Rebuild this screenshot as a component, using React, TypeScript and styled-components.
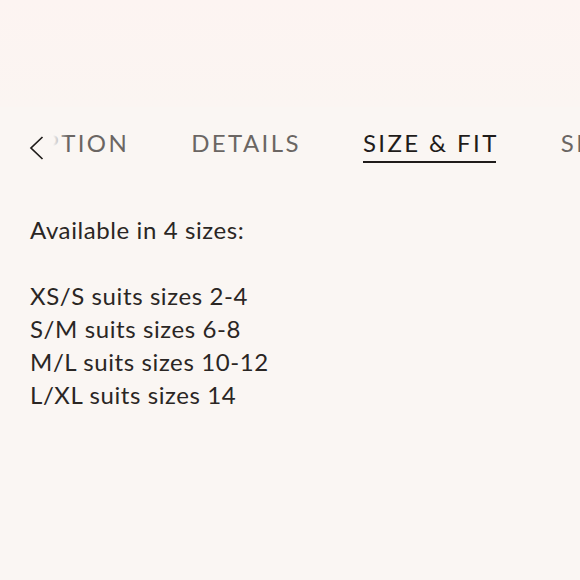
import React from 'react'
import styled, { createGlobalStyle } from 'styled-components'

const Global = createGlobalStyle`
  html, body {
    margin: 0;
    padding: 0;
    background: #faf6f3;
  }
  body {
    font-family: Lato, "Noto Sans", sans-serif;
  }
`

const Page = styled.div`
  width: 580px;
  height: 580px;
  overflow: hidden;
  background: #faf6f3;
  display: flex;
  flex-direction: column;
`

const TopBand = styled.div`
  height: 107px;
  background: linear-gradient(180deg, #fdf4f2 0%, #fbf5f2 100%);
`

const TabBar = styled.nav`
  position: relative;
  height: 60px;
  overflow: hidden;
`

const TabStrip = styled.div`
  display: flex;
  gap: 62px;
  margin-left: -53px;
  padding-top: 22px;
  white-space: nowrap;
`

const Tab = styled.div<{ $active?: boolean }>`
  position: relative;
  font-size: 24px;
  letter-spacing: 2.4px;
  line-height: 28px;
  padding-bottom: 6px;
  color: ${p => (p.$active ? '#1f1c1a' : '#6b6663')};

  &::after {
    content: '';
    position: absolute;
    left: 0;
    right: 2.4px;
    bottom: 0;
    height: 2px;
    background: ${p => (p.$active ? '#1f1c1a' : 'transparent')};
  }
`

const Back = styled.button`
  position: absolute;
  left: 0;
  top: 0;
  height: 100%;
  width: 68px;
  border: none;
  padding: 29px 0 0 29px;
  display: flex;
  align-items: flex-start;
  background: linear-gradient(90deg, #faf6f3 0%, #faf6f3 78%, rgba(250, 246, 243, 0) 100%);
  cursor: pointer;
`

const Body = styled.div`
  padding: 46px 30px 0;
  font-size: 24px;
  letter-spacing: 0.6px;
  line-height: 33px;
  color: #2a2624;
`

const Line = styled.div`
  min-height: 33px;
`

const tabs = ['DESCRIPTION', 'DETAILS', 'SIZE & FIT', 'SHIPPING']
const lines = [
  'Available in 4 sizes:',
  '',
  'XS/S suits sizes 2-4',
  'S/M suits sizes 6-8',
  'M/L suits sizes 10-12',
  'L/XL suits sizes 14',
]

export default function App() {
  return (
    <Page>
      <Global />
      <TopBand />
      <TabBar>
        <TabStrip>
          {tabs.map(t => (
            <Tab key={t} $active={t === 'SIZE & FIT'}>{t}</Tab>
          ))}
        </TabStrip>
        <Back aria-label="back">
          <svg width="15" height="24" viewBox="0 0 15 24" fill="none">
            <path d="M13.5 1 L2 12 L13.5 23" stroke="#1f1c1a" strokeWidth="1.7" />
          </svg>
        </Back>
      </TabBar>
      <Body>
        {lines.map((l, i) => (
          <Line key={i}>{l}</Line>
        ))}
      </Body>
    </Page>
  )
}
